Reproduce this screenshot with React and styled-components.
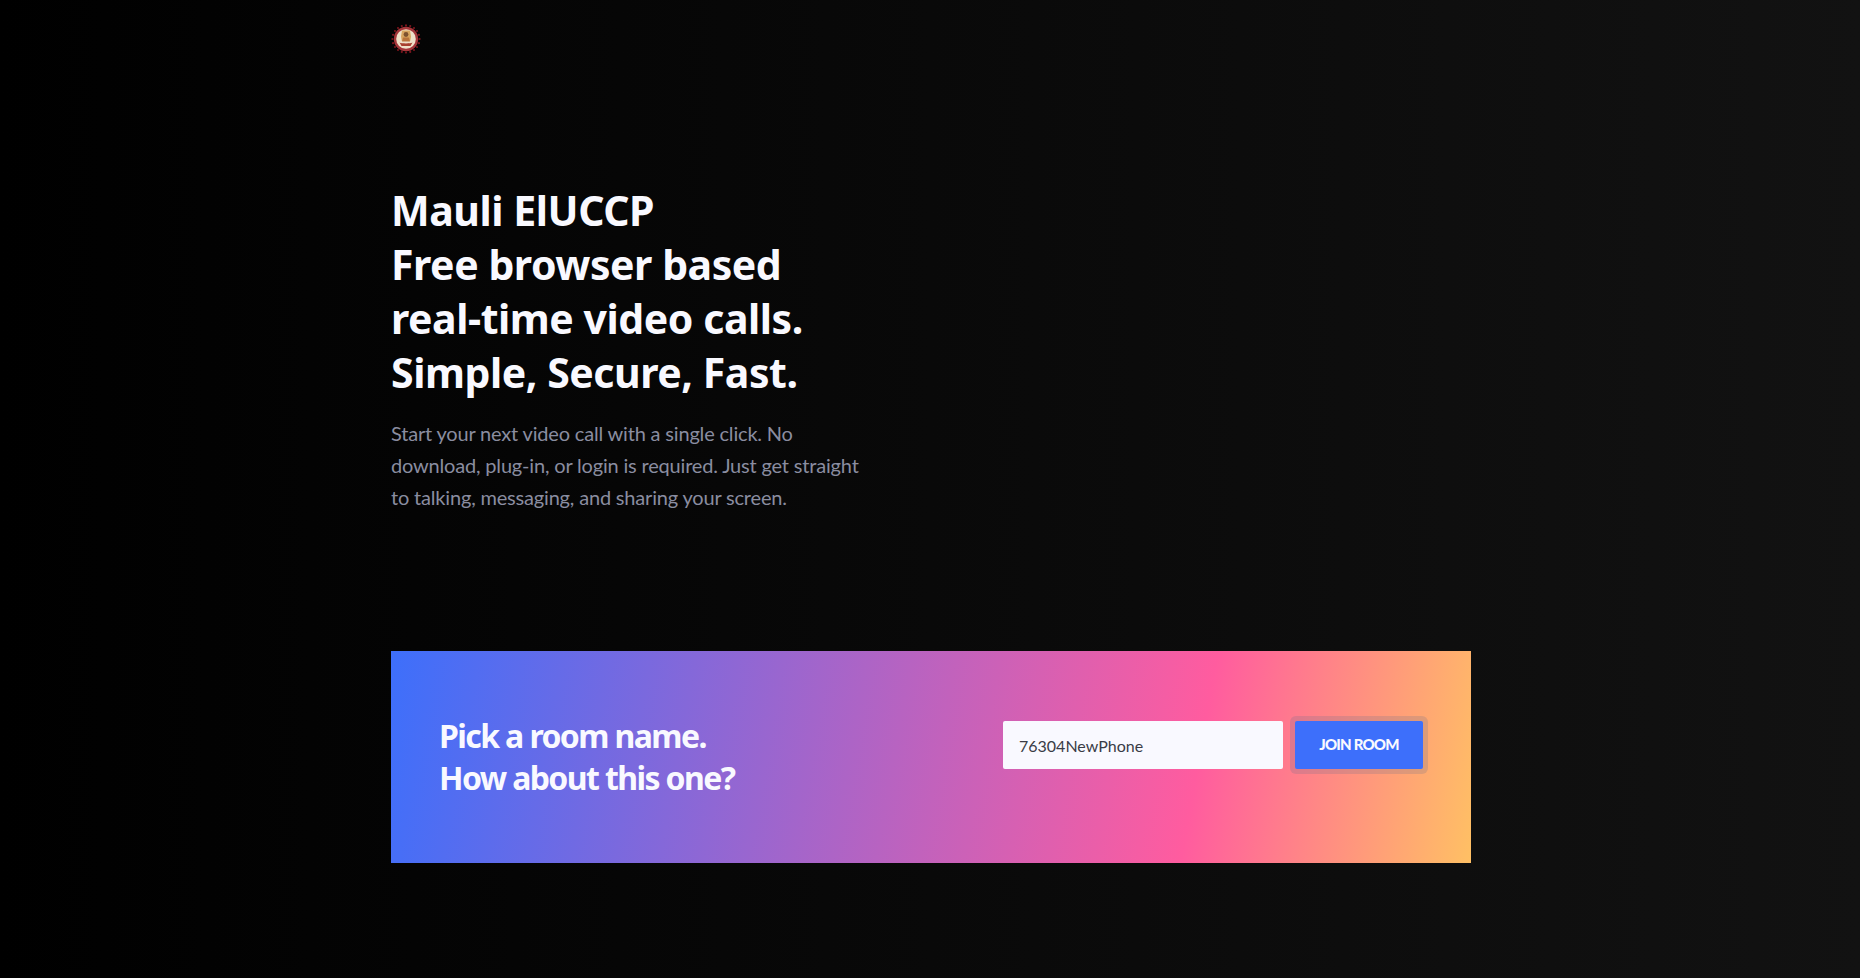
import React from 'react';
import styled, { createGlobalStyle } from 'styled-components';

const GlobalStyle = createGlobalStyle`
  * {
    box-sizing: border-box;
  }

  html, body {
    margin: 0;
    padding: 0;
    height: 100%;
  }

  body {
    background: #000;
    font-family: 'Lato', 'Liberation Sans', sans-serif;
  }
`;

const Page = styled.div`
  min-height: 100vh;
  background: linear-gradient(to right, #000 0%, #121212 100%);
`;

const Container = styled.div`
  width: 1080px;
  margin: 0 auto 0 391px;
  display: flex;
  flex-direction: column;
`;

const Header = styled.header`
  height: 78px;
  padding-top: 24px;
`;

const Logo = styled.svg`
  display: block;
  width: 30px;
  height: 30px;
`;

const Hero = styled.section`
  padding-top: 105px;
  width: 480px;
`;

const Title = styled.h1`
  margin: 0 0 18px;
  font-family: 'Noto Sans', 'Open Sans', sans-serif;
  font-size: 41px;
  font-weight: 700;
  line-height: 54px;
  letter-spacing: -0.45px;
  color: #f9f9ff;
`;

const Subtitle = styled.p`
  margin: 0;
  font-size: 20px;
  line-height: 32px;
  letter-spacing: -0.18px;
  color: #8a8da0;
`;

const Card = styled.section`
  margin-top: 138px;
  height: 212px;
  padding: 0 48px;
  display: flex;
  align-items: center;
  justify-content: space-between;
  background: linear-gradient(100deg, #3d6ffb 0%, #ff5c9f 74%, #ffc064 100%);
`;

const CardTitle = styled.h2`
  margin: 0;
  font-family: 'Noto Sans', 'Open Sans', sans-serif;
  font-size: 32px;
  font-weight: 700;
  line-height: 42px;
  letter-spacing: -1.6px;
  color: #f9f9ff;
`;

const JoinForm = styled.form`
  display: flex;
  align-items: center;
  gap: 12px;
  margin-bottom: 24px;
`;

const RoomInput = styled.input`
  width: 280px;
  height: 48px;
  padding: 0 16px;
  border: none;
  border-radius: 2px;
  outline: none;
  background: #f9f9ff;
  font-family: 'Lato', sans-serif;
  font-size: 16px;
  color: #3a3c46;
`;

const JoinButton = styled.button`
  width: 128px;
  height: 48px;
  padding: 0 0 2px;
  border: none;
  border-radius: 2px;
  background: #3d6ffb;
  box-shadow: 0 0 0 5px rgba(100, 110, 140, 0.22);
  font-family: 'Lato', sans-serif;
  font-size: 15px;
  font-weight: 900;
  letter-spacing: -0.8px;
  color: #f9f9ff;
`;

const rimDots = Array.from({ length: 20 }, (_, i) => (i * Math.PI * 2) / 20);

const App = () => {
  return (
    <Page>
      <GlobalStyle />
      <Container>
        <Header>
          <Logo viewBox="0 0 30 30">
            {rimDots.map((a) => (
              <circle
                key={a}
                cx={15 + 13.6 * Math.cos(a)}
                cy={15 + 13.6 * Math.sin(a)}
                r="1.1"
                fill="#7a151c"
              />
            ))}
            <circle cx="15" cy="15" r="12.2" fill="#a5363a" />
            <circle cx="15" cy="15" r="9.8" fill="#efe0c8" />
            <path d="M11 6.5h8l1 6-.8 4.5h-8.4l-.8-4.5z" fill="#d8a55f" />
            <circle cx="15" cy="10.5" r="2.4" fill="#7d5230" />
            <path d="M12 13.5h6l1 4h-8z" fill="#b9743c" />
            <path d="M8.5 18.5c2 1.2 11 1.2 13 0l-2 3.5h-9z" fill="#a8402f" />
          </Logo>
        </Header>

        <Hero>
          <Title>
            Mauli ElUCCP
            <br />
            Free browser based
            <br />
            real-time video calls.
            <br />
            Simple, Secure, Fast.
          </Title>
          <Subtitle>
            Start your next video call with a single click. No download, plug-in, or login is required. Just get straight to talking, messaging, and sharing your screen.
          </Subtitle>
        </Hero>

        <Card>
          <CardTitle>
            Pick a room name.
            <br />
            How about this one?
          </CardTitle>
          <JoinForm>
            <RoomInput defaultValue="76304NewPhone" />
            <JoinButton type="button">JOIN ROOM</JoinButton>
          </JoinForm>
        </Card>
      </Container>
    </Page>
  );
};

export default App;
